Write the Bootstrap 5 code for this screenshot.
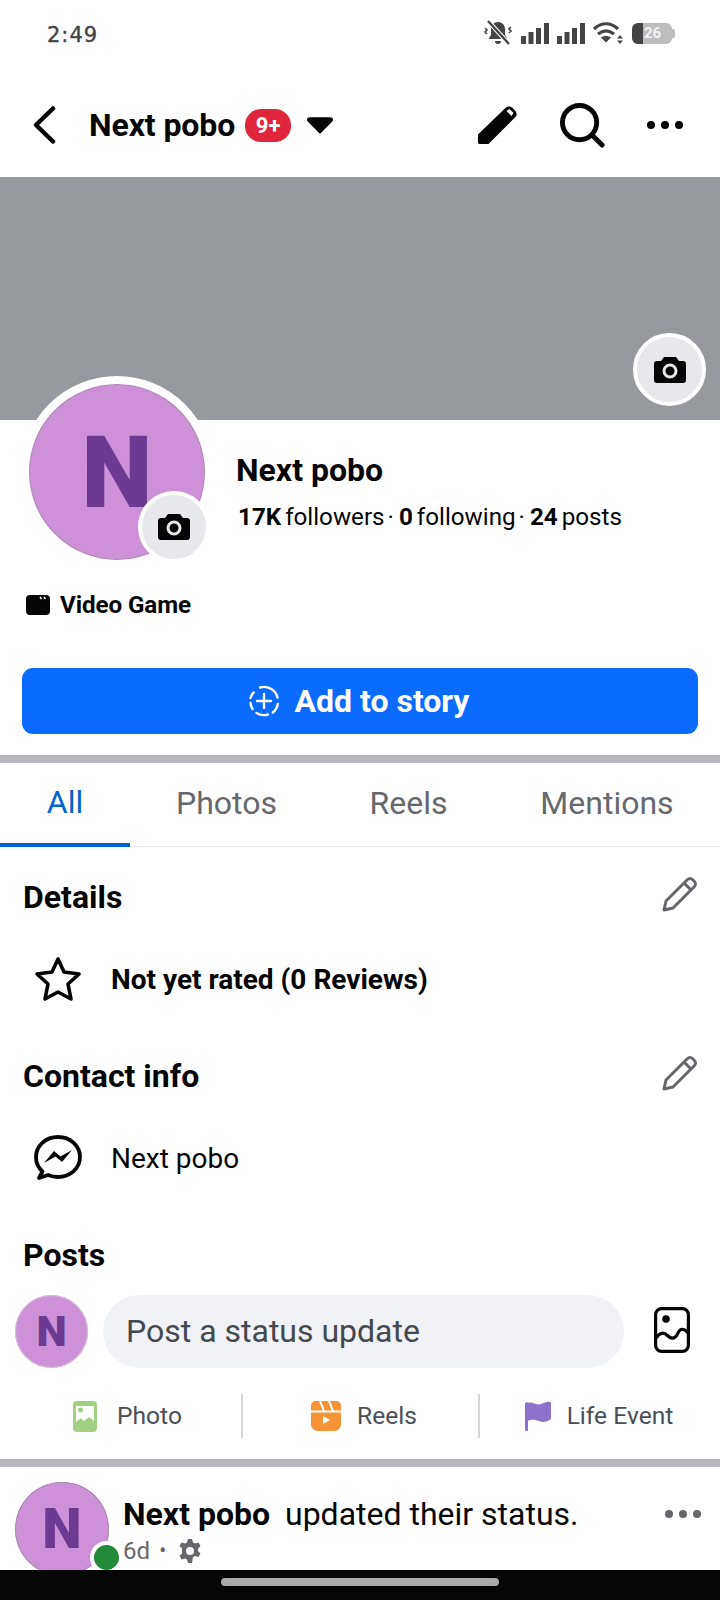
<!DOCTYPE html>
<html lang="en">
<head>
<meta charset="utf-8">
<title>Next pobo</title>
<link href="https://cdn.jsdelivr.net/npm/bootstrap@5.3.0/dist/css/bootstrap.min.css" rel="stylesheet">
<style>
html,body{height:1600px;margin:0;background:#fff}
body{font-family:Roboto,"Liberation Sans",sans-serif;color:#050505;overflow:hidden}
.screen{height:1600px}
.scroll-area{min-height:0;overflow:hidden}
.status-row{height:60px;padding:0 45px 0 47px;color:#444}
.clock{font-family:"DejaVu Sans",sans-serif;font-size:21px;letter-spacing:1px;margin-top:12px;-webkit-text-stroke:.4px #444}
.status-icons{gap:8px;margin-top:6px}
.batt{width:40px;height:21px;border-radius:6px;background:#bdbdbd;position:relative;overflow:hidden;color:#f4f4f4;font-size:15px;font-weight:700;line-height:21px;padding-left:12px}
.batt-fill{position:absolute;left:0;top:0;bottom:0;width:11px;background:#444}
.batt-nub{width:3px;height:9px;background:#bdbdbd;border-radius:0 2px 2px 0;display:block}
.app-bar{height:117px;padding:13px 36px 0 32px}
.page-title{font-size:32px;font-weight:700;margin-left:33px;letter-spacing:-.1px}
.count-pill{background:#e0263c;color:#fff;font-size:22px;font-weight:700;border-radius:16px;width:46px;height:33px;margin-left:10px;margin-top:1px}
.caret-icon{margin-left:16px}
.bar-tools{gap:41px}
.cover-band{height:243px;background:#96999d;position:relative}
.cam-disc{position:absolute;border-radius:50%;background:#e6e8eb;border:4px solid #fff}
.cam-cover{width:73px;height:73px;right:14px;top:156px}
.head-row{padding-left:21px;margin-top:-44px;position:relative}
.big-avatar{width:192px;height:192px;border-radius:50%;border:8px solid #fff;background:#cd90d9;position:relative;flex:none;box-shadow:inset 0 0 0 1px #a88ab0}
.big-n{font-size:101px;font-weight:900;color:#6c3a92;line-height:1;margin-top:0}
.cam-small{width:72px;height:72px;right:-5px;bottom:-3px;border-width:4px}
.head-text{padding:68px 0 0 23px}
.pg-name{font-size:32px;font-weight:700;line-height:52px}
.stats{font-size:24.200px;line-height:34px;margin:4px 0 0 2px;white-space:nowrap;display:flex}
.stats b{font-weight:700;margin-right:4px}
.stats i{font-style:normal;margin:0 5px 0 3px}
.cat-row{padding-left:26px;font-size:24.200px;font-weight:700;height:38px;margin-top:18px;gap:10px;letter-spacing:-.1px}
.story-btn{height:66px;margin:44px 22px 0;background:#0a6cff;border:0;border-radius:11px;color:#fff;font-size:32px;font-weight:700;gap:15px;display:flex;align-items:center;justify-content:center;padding-right:15px;width:676px}
.thick-rule{height:8px;background:#b4b6bb}
.rule-a{margin-top:21px}
.rule-b{margin-top:21px}
.tab-strip{height:84px;border-bottom:1px solid #e4e6eb;font-size:32px;color:#65686d}
.tab-cell{height:84px;display:flex;align-items:center;justify-content:center;padding-bottom:4px}
.tab-on{color:#0064d1;border-bottom:4px solid #0064d1;width:130px;padding-top:2px}
.sec-head{padding:0 22px 0 23px;font-size:32px;font-weight:700;height:48px}
.edit-icon{margin-bottom:6px}
.info-row{padding-left:34px;height:50px;font-size:28px;gap:29px}
.info-row b,.info-row .info-text{font-weight:700;padding-top:2px}
.info-row .info-text{font-weight:400}
.gap-details{margin-top:26px}
.gap-rating{margin-top:33px}
.gap-contact{margin-top:48px}
.gap-msg{margin-top:33px}
.gap-posts{margin-top:48px}
.composer{padding:0 30px 0 15px;margin-top:16px;gap:15px}
.mid-avatar{background:#cd90d9;border-radius:50%;font-weight:900;color:#6c3a92;flex:none;box-shadow:inset 0 0 0 1px #d9b9e0}
.av73{width:73px;height:73px;font-size:43px}
.status-input{height:73px;width:521px;background:#f0f2f5;border-radius:37px;font-size:32px;color:#444950;padding:0 0 2px 23px}
.photo-glyph{margin-bottom:4px}
.post-actions{margin-top:26px;height:44px;font-size:24.600px;color:#4b4f56}
.post-actions .col-cell{height:44px;display:flex;align-items:center;justify-content:center;gap:16px}
.post-actions .act-a{gap:20px}
.act-a{width:241px;padding-left:14px}
.act-b{width:235px;padding-left:7px}
.act-c{width:240px;padding-right:2px}
.v-rule{width:2px;height:44px;background:#d5d7da;flex:none}
.post-row{padding:15px 0 0 15px;position:relative}
.av94{width:94px;height:94px;font-size:56px;position:relative;box-shadow:inset 0 0 0 1px #a88ab0}
.online{position:absolute;border-radius:50%;background:#238a38;border:4px solid #fff;right:-14px;bottom:2px;box-sizing:content-box;width:25px;height:25px}
.post-line{font-size:32px;line-height:36px;white-space:nowrap;margin-left:14px;padding-top:14px}
.post-line b{font-weight:700;margin-right:7px}
.post-meta{font-size:24px;color:#65676b;gap:8px;line-height:28px;margin:5px 0 0 14px}
.dot-sep{font-size:22px;margin:0 2px 0 1px}
.gear-icon{margin-left:2px}
.more-dim{position:absolute;right:18px;top:41px}
.nav-foot{height:30px;background:#060606;flex:none}
.home-pill{width:278px;height:8px;background:#aaa;border-radius:4px;margin-top:8px}
</style>
</head>
<body>
<div class="screen d-flex flex-column">
 <div class="scroll-area flex-grow-1">
  <div class="status-row d-flex align-items-center justify-content-between">
   <span class="clock">2:49</span>
   <div class="status-icons d-flex align-items-center">
    <svg width="30" height="26" viewBox="0 0 30 26" fill="#444"><path d="M15 2c4 0 7 3 7 7v6l2 3v1H6v-1l2-3V9c0-4 3-7 7-7zM12 21h6a3 3 0 0 1-6 0z"/><path d="M5 1l21 23" stroke="#fff" stroke-width="4.5"/><path d="M5 1l21 23" stroke="#444" stroke-width="2.400"/><path d="M2 8l2 2-2 2 2 2M28 7l-2 2 2 2-2 2" fill="none" stroke="#444" stroke-width="1.600"/></svg>
    <svg width="28" height="21" viewBox="0 0 28 21" fill="#444"><rect x="0" y="13" width="5" height="8"/><rect x="7.500" y="9" width="5" height="12"/><rect x="15" y="5" width="5" height="16"/><rect x="23" y="0" width="5" height="21"/></svg>
    <svg width="28" height="21" viewBox="0 0 28 21" fill="#444"><rect x="0" y="13" width="5" height="8"/><rect x="7.500" y="9" width="5" height="12"/><rect x="15" y="5" width="5" height="16"/><rect x="23" y="0" width="5" height="21"/></svg>
    <svg width="31" height="22" viewBox="0 0 31 22" fill="none" stroke="#444" stroke-width="3.200"><path d="M1 7c7-7 17-7 24 0M5 12c5-4 11-4 16 0"/><path d="M8 15.500c3-2 7-2 10 0l-5 5z" fill="#444" stroke="none"/><path d="M27 13l3 3.500h-6zM27 22l3-3.500h-6z" fill="#444" stroke="none"/></svg>
    <div class="d-flex align-items-center"><div class="batt"><span class="batt-fill"></span>26</div><span class="batt-nub"></span></div>
   </div>
  </div>
  <div class="app-bar d-flex align-items-center">
   <svg width="24" height="38" viewBox="0 0 24 38" fill="none" stroke="#050505" stroke-width="4.500" stroke-linecap="round" stroke-linejoin="round"><path d="M21 2.500L4 19l17 16.500"/></svg>
   <span class="page-title">Next pobo</span>
   <span class="count-pill d-flex align-items-center justify-content-center">9+</span>
   <svg class="caret-icon" width="26" height="17" viewBox="0 0 28 18" fill="#050505"><path d="M3 0h22c3 0 4 3 2 5L16 16c-1 2-3 2-4 0L1 5C-1 3 0 0 3 0z"/></svg>
   <div class="bar-tools ms-auto d-flex align-items-center">
    <svg width="42" height="42" viewBox="0 0 44 44"><path d="M1 32L30 4c2-2 5-2 7 0l3 3c2 2 2 5 0 7L12 42H3c-1 0-2-1-2-2z" fill="#050505"/><path d="M32.500 7.500l1.500-1 3 3-1 1.500z" fill="#fff" stroke="#fff" stroke-width="2"/></svg>
    <svg width="45" height="45" viewBox="0 0 46 46" fill="none" stroke="#050505" stroke-width="5" stroke-linecap="round"><circle cx="20" cy="20" r="17.500"/><path d="M33 33l10 10"/></svg>
    <svg width="38" height="10" viewBox="0 0 38 10" fill="#050505"><circle cx="5" cy="5" r="4"/><circle cx="19" cy="5" r="4"/><circle cx="33" cy="5" r="4"/></svg>
   </div>
  </div>
  <div class="cover-band">
   <div class="cam-disc cam-cover d-flex align-items-center justify-content-center">
    <svg width="32" height="28" viewBox="0 0 32 28"><path d="M10 1h12l3 4h4c2 0 3 1 3 3v16c0 2-1 3-3 3H3c-2 0-3-1-3-3V8c0-2 1-3 3-3h4z" fill="#050505"/><circle cx="16" cy="15" r="6" fill="none" stroke="#e6e8eb" stroke-width="3"/></svg>
   </div>
  </div>
  <div class="head-row d-flex align-items-start">
   <div class="big-avatar d-flex align-items-center justify-content-center">
    <span class="big-n">N</span>
    <div class="cam-disc cam-small d-flex align-items-center justify-content-center">
     <svg width="32" height="28" viewBox="0 0 32 28"><path d="M10 1h12l3 4h4c2 0 3 1 3 3v16c0 2-1 3-3 3H3c-2 0-3-1-3-3V8c0-2 1-3 3-3h4z" fill="#050505"/><circle cx="16" cy="15" r="6" fill="none" stroke="#e6e8eb" stroke-width="3"/></svg>
    </div>
   </div>
   <div class="head-text">
    <div class="pg-name">Next pobo</div>
    <div class="stats"><b>17K</b>followers<i>·</i><b>0</b>following<i>·</i><b>24</b>posts</div>
   </div>
  </div>
  <div class="cat-row d-flex align-items-center">
   <svg width="24" height="20" viewBox="0 0 24 20"><rect width="24" height="20" rx="4" fill="#050505"/><path d="M14 2l1.500 2M18 2l1.500 2" stroke="#fff" stroke-width="1.400"/></svg>
   <span>Video Game</span>
  </div>
  <button type="button" class="btn story-btn">
   <svg width="32" height="32" viewBox="0 0 32 32" fill="none" stroke="#fff" stroke-width="2.400" stroke-linecap="round"><path d="M16 9v14M9 16h14"/><path d="M12 2.500a14 14 0 0 1 17.500 10M29.800 19a14 14 0 0 1-5 8.500M20 29.500a14 14 0 0 1-11.500-1.500M4.500 24a14 14 0 0 1-2-6M2.500 13a14 14 0 0 1 3-5.500"/></svg>
   <span>Add to story</span>
  </button>
  <div class="thick-rule rule-a"></div>
  <div class="tab-strip d-flex">
   <div class="tab-cell tab-on">All</div>
   <div class="tab-cell" style="width:193px">Photos</div>
   <div class="tab-cell" style="width:171px">Reels</div>
   <div class="tab-cell" style="width:226px">Mentions</div>
  </div>
  <div class="sec-head d-flex align-items-center justify-content-between gap-details">
   <span>Details</span>
   <svg class="edit-icon" width="36" height="36" viewBox="0 0 36 36" fill="none" stroke="#65676b" stroke-width="3" stroke-linejoin="round"><path d="M2 34l2-9L25 4c2-2 4-2 6 0l1 1c2 2 2 4 0 6L11 32z"/><path d="M22 7l7 7"/></svg>
  </div>
  <div class="info-row d-flex align-items-center gap-rating">
   <svg width="48" height="46" viewBox="0 0 48 46" fill="none" stroke="#050505" stroke-width="3.600" stroke-linejoin="round"><path d="M24 3l6 13 15 2-11 10 3 15-13-7-13 7 3-15L3 18l15-2z"/></svg>
   <b>Not yet rated (0 Reviews)</b>
  </div>
  <div class="sec-head d-flex align-items-center justify-content-between gap-contact">
   <span>Contact info</span>
   <svg class="edit-icon" width="36" height="36" viewBox="0 0 36 36" fill="none" stroke="#65676b" stroke-width="3" stroke-linejoin="round"><path d="M2 34l2-9L25 4c2-2 4-2 6 0l1 1c2 2 2 4 0 6L11 32z"/><path d="M22 7l7 7"/></svg>
  </div>
  <div class="info-row d-flex align-items-center gap-msg">
   <svg width="48" height="46" viewBox="0 0 48 46"><path d="M24 2C11.500 2 2 11 2 22c0 6 2.500 11 6.500 14.500L5 43l9-3c3 1.300 6.500 2 10 2 12.500 0 22-9 22-20S36.500 2 24 2z" fill="none" stroke="#050505" stroke-width="3.800" stroke-linejoin="round"/><path d="M10 28l10-12 6.500 5.500L38 15 28 27l-6.500-5.500z" fill="#050505"/></svg>
   <span class="info-text">Next pobo</span>
  </div>
  <div class="sec-head d-flex align-items-center gap-posts"><span>Posts</span></div>
  <div class="composer d-flex align-items-center">
   <div class="mid-avatar av73 d-flex align-items-center justify-content-center">N</div>
   <div class="status-input d-flex align-items-center">Post a status update</div>
   <svg class="photo-glyph ms-auto" width="36" height="46" viewBox="0 0 36 46" fill="none" stroke="#050505" stroke-width="3.200"><rect x="1.600" y="1.600" width="32.800" height="42.800" rx="6"/><circle cx="12" cy="12" r="3.800" fill="#050505" stroke="none"/><path d="M2 31c4-6 8-6 12-2s8 2 10-3 6-5 10 0"/></svg>
  </div>
  <div class="post-actions d-flex">
   <div class="col-cell act-a">
    <svg width="24" height="31" viewBox="0 0 24 31"><rect width="24" height="31" rx="4" fill="#a2d183"/><path d="M3 5h18v15l-5-4-5 4-3-3-5 4z" fill="#fff"/><circle cx="7.500" cy="9" r="2.500" fill="#a2d183"/></svg>
    <span>Photo</span>
   </div>
   <div class="v-rule"></div>
   <div class="col-cell act-b">
    <svg width="30" height="30" viewBox="0 0 30 30"><path d="M5 0h20c3 0 5 2 5 5v18c0 4-3 7-7 7H7c-4 0-7-3-7-7V5c0-3 2-5 5-5z" fill="#f79337"/><path d="M0 10.500h30M9 0l4 10M18 0l4 10" stroke="#fff" stroke-width="2"/><path d="M12 15l7 4-7 4z" fill="#fff"/></svg>
    <span>Reels</span>
   </div>
   <div class="v-rule"></div>
   <div class="col-cell act-c">
    <svg width="26" height="30" viewBox="0 0 26 30" fill="#8c72cb"><path d="M0 3c0-2 3-2 3-1 5-2 8 3 13 1 3-1 7-3 9-2 1 0 1 1 1 2v15c-4 3-8 4-12 2-4-1-8-2-11 0v9c0 2-3 2-3 0z"/></svg>
    <span>Life Event</span>
   </div>
  </div>
  <div class="thick-rule rule-b"></div>
  <div class="post-row d-flex align-items-start">
   <div class="mid-avatar av94 d-flex align-items-center justify-content-center">N<span class="online"></span></div>
   <div class="flex-grow-1">
    <div class="post-line"><b>Next pobo</b> updated their status.</div>
    <div class="post-meta d-flex align-items-center">
     <span>6d</span><span class="dot-sep">•</span>
     <svg class="gear-icon" width="24" height="24" viewBox="0 0 24 24"><path fill="#65676b" d="M10 0h4l1 3.500 2 1 3.500-1 2 3.500-2.500 2.500v2.500l2.500 2.500-2 3.500-3.500-1-2 1L14 24h-4l-1-3.500-2-1-3.500 1-2-3.500L4 14.500V9.500L1.500 7l2-3.500 3.500 1 2-1z"/><circle cx="12" cy="12" r="4" fill="#fff"/></svg>
    </div>
   </div>
   <svg class="more-dim" width="38" height="12" viewBox="0 0 38 12" fill="#65676b"><circle cx="5" cy="6" r="4"/><circle cx="19" cy="6" r="4"/><circle cx="33" cy="6" r="4"/></svg>
  </div>
 </div>
 <div class="nav-foot d-flex justify-content-center"><div class="home-pill"></div></div>
</div>
<script src="https://cdn.jsdelivr.net/npm/bootstrap@5.3.0/dist/js/bootstrap.bundle.min.js"></script>
</body>
</html>
